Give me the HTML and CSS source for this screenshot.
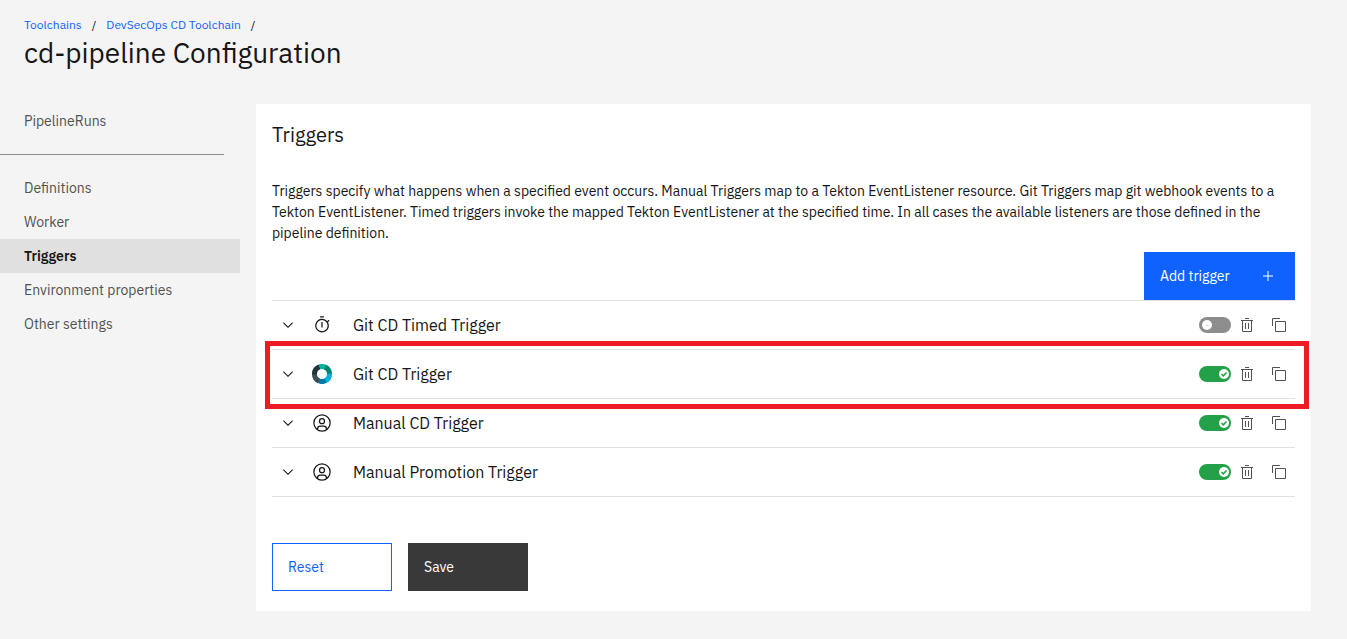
FILE: index.html
```html
<!DOCTYPE html>
<html lang="en">
<head>
<meta charset="utf-8">
<meta name="viewport" content="width=device-width, initial-scale=1">
<title>cd-pipeline Configuration</title>
<link rel="stylesheet" href="styles.css">
</head>
<body>
<svg class="sprite" aria-hidden="true">
  <symbol id="chevron" viewBox="0 0 16 16"><path d="M8 11 3 6l.7-.7L8 9.600l4.300-4.300.7.7z"/></symbol>
  <symbol id="trash" viewBox="0 0 16 16"><path d="M6 6h1v6H6zM9 6h1v6H9z"/><path d="M2 3v1h1v10a1 1 0 0 0 1 1h8a1 1 0 0 0 1-1V4h1V3zm2 11V4h8v10zM6 1h4v1H6z"/></symbol>
  <symbol id="copy" viewBox="0 0 32 32"><path d="M28 10v18H10V10h18m0-2H10a2 2 0 0 0-2 2v18a2 2 0 0 0 2 2h18a2 2 0 0 0 2-2V10a2 2 0 0 0-2-2z"/><path d="M4 18H2V4a2 2 0 0 1 2-2h14v2H4z"/></symbol>
  <symbol id="timer" viewBox="0 0 32 32"><path d="M15 11h2v9h-2zM13 2h6v2h-6z"/><path d="m28 9-1.420-1.410-2.250 2.250a10.940 10.940 0 1 0 1.180 1.650zM16 26a9 9 0 1 1 9-9 9 9 0 0 1-9 9z"/></symbol>
  <symbol id="user" viewBox="0 0 32 32"><path d="M16 8a5 5 0 1 0 5 5 5 5 0 0 0-5-5zm0 8a3 3 0 1 1 3-3 3 3 0 0 1-3 3z"/><path d="M16 2a14 14 0 1 0 14 14A14 14 0 0 0 16 2zm-6 24.380V25a3 3 0 0 1 3-3h6a3 3 0 0 1 3 3v1.380a11.900 11.900 0 0 1-12 0zm13.990-1.450A5 5 0 0 0 19 20h-6a5 5 0 0 0-4.990 4.930 12 12 0 1 1 15.980 0z"/></symbol>
  <symbol id="check" viewBox="0 0 12 12"><path d="m3 6 2.200 2.200L9 4.200" fill="none" stroke="currentColor" stroke-width="1.800"/></symbol>
  <symbol id="dash" viewBox="0 0 12 12"><path d="M5 6h3v1H5z"/></symbol>
</svg>

<header class="page-header">
  <nav class="breadcrumb" aria-label="Breadcrumb">
    <a href="#">Toolchains</a><span>/</span><a href="#">DevSecOps CD Toolchain</a><span>/</span>
  </nav>
  <h1>cd-pipeline Configuration</h1>
</header>

<div class="layout">
  <nav class="side-nav" aria-label="Configuration">
    <a href="#">PipelineRuns</a>
    <hr>
    <a href="#">Definitions</a>
    <a href="#">Worker</a>
    <a href="#" class="active" aria-current="page">Triggers</a>
    <a href="#">Environment properties</a>
    <a href="#">Other settings</a>
  </nav>

  <main class="panel">
    <h2>Triggers</h2>
    <p>Triggers specify what happens when a specified event occurs. Manual Triggers map to a Tekton EventListener resource. Git Triggers map git webhook events to a Tekton EventListener. Timed triggers invoke the mapped Tekton EventListener at the specified time. In all cases the available listeners are those defined in the pipeline definition.</p>
    <div class="toolbar">
      <button class="add" type="button">Add trigger
        <svg width="16" height="16" viewBox="0 0 16 16" aria-hidden="true"><path d="M7.500 3h1v4.500H13v1H8.500V13h-1V8.500H3v-1h4.500z" fill="currentColor"/></svg>
      </button>
    </div>

    <ul class="triggers">
      <li>
        <button class="icon-button" type="button" aria-label="Expand"><svg class="small"><use href="#chevron"/></svg></button>
        <span class="kind"><svg class="medium"><use href="#timer"/></svg></span>
        <label class="name" for="t1">Git CD Timed Trigger</label>
        <span class="toggle"><input id="t1" type="checkbox"><svg><use class="off" href="#dash"/><use class="on" href="#check"/></svg></span>
        <button class="icon-button muted" type="button" aria-label="Delete"><svg class="small"><use href="#trash"/></svg></button>
        <button class="icon-button muted" type="button" aria-label="Duplicate"><svg class="small"><use href="#copy"/></svg></button>
      </li>
      <li class="highlighted">
        <button class="icon-button" type="button" aria-label="Expand"><svg class="small"><use href="#chevron"/></svg></button>
        <span class="kind">
          <svg class="medium" viewBox="0 0 20 20" fill="none" stroke-width="5">
            <path stroke="#00b39b" d="M7.500 2.950A7.500 7.500 0 0 1 14 3.650"/>
            <path stroke="#00856f" d="M13 3.130A7.500 7.500 0 0 1 17.490 10.300"/>
            <path stroke="#00b0da" d="M17.490 9.700A7.500 7.500 0 0 1 13 16.870"/>
            <path stroke="#047aa5" d="M13.500 16.630A7.500 7.500 0 0 1 6.500 16.630"/>
            <path stroke="#3c4e56" d="M7 16.870A7.500 7.500 0 0 1 2.510 9.700"/>
            <path stroke="#21333b" d="M2.510 10.300A7.500 7.500 0 0 1 7.500 2.950"/>
          </svg>
        </span>
        <label class="name" for="t2">Git CD Trigger</label>
        <span class="toggle"><input id="t2" type="checkbox" checked><svg><use class="off" href="#dash"/><use class="on" href="#check"/></svg></span>
        <button class="icon-button muted" type="button" aria-label="Delete"><svg class="small"><use href="#trash"/></svg></button>
        <button class="icon-button muted" type="button" aria-label="Duplicate"><svg class="small"><use href="#copy"/></svg></button>
      </li>
      <li>
        <button class="icon-button" type="button" aria-label="Expand"><svg class="small"><use href="#chevron"/></svg></button>
        <span class="kind"><svg class="medium"><use href="#user"/></svg></span>
        <label class="name" for="t3">Manual CD Trigger</label>
        <span class="toggle"><input id="t3" type="checkbox" checked><svg><use class="off" href="#dash"/><use class="on" href="#check"/></svg></span>
        <button class="icon-button muted" type="button" aria-label="Delete"><svg class="small"><use href="#trash"/></svg></button>
        <button class="icon-button muted" type="button" aria-label="Duplicate"><svg class="small"><use href="#copy"/></svg></button>
      </li>
      <li>
        <button class="icon-button" type="button" aria-label="Expand"><svg class="small"><use href="#chevron"/></svg></button>
        <span class="kind"><svg class="medium"><use href="#user"/></svg></span>
        <label class="name" for="t4">Manual Promotion Trigger</label>
        <span class="toggle"><input id="t4" type="checkbox" checked><svg><use class="off" href="#dash"/><use class="on" href="#check"/></svg></span>
        <button class="icon-button muted" type="button" aria-label="Delete"><svg class="small"><use href="#trash"/></svg></button>
        <button class="icon-button muted" type="button" aria-label="Duplicate"><svg class="small"><use href="#copy"/></svg></button>
      </li>
    </ul>

    <div class="actions">
      <button class="reset" type="button">Reset</button>
      <button class="save" type="button">Save</button>
    </div>
  </main>
</div>
</body>
</html>
```
FILE: styles.css
```css
* {
  box-sizing: border-box;
}

body {
  margin: 0;
  background: #f4f4f4;
  color: #161616;
  font: 14px/18px "IBM Plex Sans", "Noto Sans", sans-serif;
}

button {
  font: inherit;
  cursor: pointer;
}

a {
  text-decoration: none;
}

svg {
  display: block;
  fill: currentColor;
}

.sprite {
  position: absolute;
  width: 0;
  height: 0;
}

.small {
  width: 16px;
  height: 16px;
}

.medium {
  width: 20px;
  height: 20px;
}

.page-header {
  padding: 16px 24px 32px;
}

.breadcrumb {
  display: flex;
  gap: 10px;
  font-size: 12px;
}

.breadcrumb a {
  color: #0f62fe;
}

h1 {
  margin: 0;
  font-size: 28px;
  font-weight: 400;
  line-height: 38px;
}

.layout {
  display: flex;
  align-items: flex-start;
  gap: 16px;
  padding: 0 36px 28px 0;
}

.side-nav {
  flex: 0 0 240px;
}

.side-nav a {
  display: block;
  padding: 8px 24px;
  color: #525252;
}

.side-nav .active {
  background: #e0e0e0;
  color: #161616;
  font-weight: 600;
}

.side-nav hr {
  margin: 16px 16px 16px 0;
  border: 0;
  border-top: 1px solid #8d8d8d;
}

.panel {
  flex: 1;
  min-width: 0;
  padding: 17px 16px 20px;
  background: #fff;
}

h2 {
  margin: 0 0 32px;
  font-size: 20px;
  font-weight: 400;
  line-height: 28px;
}

.panel p {
  margin: 0 0 8px;
  line-height: 21px;
}

.toolbar {
  display: flex;
  justify-content: flex-end;
}

.add {
  display: flex;
  align-items: center;
  justify-content: space-between;
  width: 151px;
  height: 48px;
  padding: 0 19px 0 16px;
  border: 0;
  background: #0f62fe;
  color: #fff;
}

.triggers {
  margin: 0 0 46px;
  padding: 0;
  border-top: 1px solid #e0e0e0;
  list-style: none;
}

.triggers li {
  position: relative;
  display: flex;
  align-items: center;
  height: 49px;
  border-bottom: 1px solid #e0e0e0;
}

.highlighted::after {
  content: "";
  position: absolute;
  inset: -9px -14px -11px -7px;
  border: 5px solid #ed1c24;
  pointer-events: none;
}

.icon-button {
  display: grid;
  place-items: center;
  width: 32px;
  height: 32px;
  padding: 0;
  border: 0;
  background: none;
  color: #161616;
}

.muted {
  color: #525252;
}

.kind {
  display: grid;
  place-items: center;
  width: 36px;
}

.name {
  flex: 1;
  padding-left: 13px;
  font-size: 16px;
  line-height: 24px;
}

.toggle {
  display: grid;
  align-items: center;
}

.toggle input,
.toggle svg {
  grid-area: 1 / 1;
}

.toggle input {
  appearance: none;
  width: 32px;
  height: 16px;
  margin: 0;
  border-radius: 8px;
  background: #8d8d8d;
}

.toggle input:checked {
  background: #24a148;
}

.toggle svg {
  width: 10px;
  height: 10px;
  margin-left: 3px;
  border-radius: 50%;
  background: #fff;
  color: #c6c6c6;
  pointer-events: none;
}

.toggle .on,
.toggle input:checked + svg .off {
  display: none;
}

.toggle input:checked + svg {
  margin-left: 20px;
  color: #24a148;
}

.toggle input:checked + svg .on {
  display: inline;
}

.actions {
  display: flex;
  gap: 16px;
}

.actions button {
  width: 120px;
  height: 48px;
  padding: 0 15px;
  border: 1px solid #393939;
  text-align: left;
}

.actions .reset {
  border-color: #0f62fe;
  background: #fff;
  color: #0f62fe;
}

.actions .save {
  background: #393939;
  color: #fff;
}
```
